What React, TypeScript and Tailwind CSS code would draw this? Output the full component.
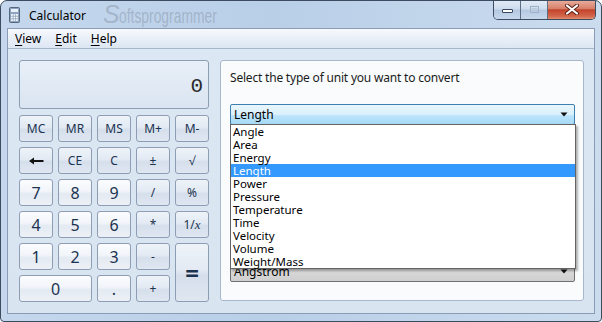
import React from "react";

const units = [
  "Angle",
  "Area",
  "Energy",
  "Length",
  "Power",
  "Pressure",
  "Temperature",
  "Time",
  "Velocity",
  "Volume",
  "Weight/Mass",
];

type Key = { label: React.ReactNode; kind: "num" | "op"; cls?: string; size?: string };

const keys: Key[] = [
  { label: "MC", kind: "op" },
  { label: "MR", kind: "op" },
  { label: "MS", kind: "op" },
  { label: "M+", kind: "op" },
  { label: "M-", kind: "op" },
  {
    label: (
      <svg width="16" height="8" viewBox="0 0 16 8">
        <path d="M1 4 L6 0.5 L6 3 L15.5 3 L15.5 5 L6 5 L6 7.5 Z" fill="#111" />
      </svg>
    ),
    kind: "op",
  },
  { label: "CE", kind: "op" },
  { label: "C", kind: "op" },
  { label: "±", kind: "op" },
  { label: "√", kind: "op" },
  { label: "7", kind: "num" },
  { label: "8", kind: "num" },
  { label: "9", kind: "num" },
  { label: "/", kind: "op" },
  { label: "%", kind: "op" },
  { label: "4", kind: "num" },
  { label: "5", kind: "num" },
  { label: "6", kind: "num" },
  { label: "*", kind: "op" },
  {
    label: (
      <span>
        1/<span className="italic font-['Liberation_Serif',serif] text-[13px]">x</span>
      </span>
    ),
    kind: "op",
  },
  { label: "1", kind: "num" },
  { label: "2", kind: "num" },
  { label: "3", kind: "num" },
  { label: "-", kind: "op" },
  { label: "=", kind: "op", cls: "row-span-2", size: "text-[24px] font-bold" },
  { label: "0", kind: "num", cls: "col-span-2" },
  { label: ".", kind: "num" },
  { label: "+", kind: "op" },
];

function CalcIcon() {
  return (
    <svg width="11" height="16" viewBox="0 0 11 16">
      <rect x="0.5" y="0.5" width="10" height="15" rx="1" fill="#8ea4be" stroke="#55677f" />
      <rect x="2" y="2" width="7" height="3" fill="#e8f1f9" />
      {[0, 1, 2].map((r) =>
        [0, 1, 2].map((c) => (
          <rect key={`${r}${c}`} x={2 + c * 2.5} y={7 + r * 2.6} width="1.8" height="1.8" fill="#f3f6fa" />
        ))
      )}
    </svg>
  );
}

function Arrow() {
  return (
    <svg width="8" height="5" viewBox="0 0 8 5">
      <path d="M0.5 0.5 L7.5 0.5 L4 4.5 Z" fill="#111" />
    </svg>
  );
}

export default function App() {
  const font = "font-['Noto_Sans','Open_Sans',sans-serif]";
  return (
    <div className={`w-[602px] h-[322px] bg-white ${font}`}>
      <div className="h-full flex flex-col rounded-t-[7px] rounded-b-[4px] border border-[#3c4b5f] bg-[linear-gradient(90deg,#c4d7ed_0%,#b9cfe8_45%,#c4d7ec_80%,#cbdcee_100%)] overflow-hidden">
        {/* title bar */}
        <div className="h-[27px] relative flex items-center shrink-0">
          <div className="ml-[8px] mt-[1px]">
            <CalcIcon />
          </div>
          <span className="ml-[9px] mt-[2px] text-[12px] text-black leading-none">Calculator</span>
          <div className="absolute left-[102px] top-[1px] flex items-end text-[rgba(120,132,148,0.4)] font-['Liberation_Sans',sans-serif] leading-none">
            <span className="text-[25px] italic">S</span>
            <span className="text-[21px] scale-x-[0.66] origin-left -ml-[1px] mb-[1px]">oftsprogrammer</span>
          </div>
          {/* window controls */}
          <div className="absolute right-[5px] -top-[1px] h-[20px] flex rounded-b-[5px] border border-t-0 border-[#3d4c60] overflow-hidden">
            <div className="w-[27px] flex items-center justify-center border-r border-[#5d6d82] bg-[linear-gradient(180deg,#e3ecf6_0%,#cddcee_48%,#b4c8e0_52%,#c7d8ec_100%)]">
              <div className="w-[11px] h-[4px] mt-[3px] bg-white border border-[#3a465a] rounded-[1px]" />
            </div>
            <div className="w-[27px] flex items-center justify-center border-r border-[#5d6d82] bg-[linear-gradient(180deg,#e3ecf6_0%,#cddcee_48%,#b4c8e0_52%,#c7d8ec_100%)]">
              <div className="w-[9px] h-[7px] border border-[#9fb1c6] flex items-center justify-center">
                <div className="w-[5px] h-[3px] border border-[#b9c8da]" />
              </div>
            </div>
            <div className="w-[47px] flex items-center justify-center bg-[linear-gradient(180deg,#eab0a0_0%,#d7806a_45%,#c4432b_52%,#d1664b_85%,#e28e6c_100%)]">
              <svg width="14" height="11" viewBox="0 0 14 11">
                <path d="M2 1.5 L12 9.5 M12 1.5 L2 9.5" stroke="#5a2016" strokeWidth="4" strokeLinecap="round" />
                <path d="M2 1.5 L12 9.5 M12 1.5 L2 9.5" stroke="#fff" strokeWidth="2.2" strokeLinecap="round" />
              </svg>
            </div>
          </div>
        </div>

        {/* client area */}
        <div className="mx-[6px] mb-[7px] flex-1 flex flex-col border border-[#8a9cb5]">
          <div className="h-[20px] flex items-center gap-[14px] pl-[7px] text-[12px] text-black border-b border-[#a5b5cb] bg-[linear-gradient(180deg,#f7f9fd_0%,#e9eff8_50%,#dce6f3_100%)]">
            <span>
              <span className="underline underline-offset-2">V</span>iew
            </span>
            <span>
              <span className="underline underline-offset-2">E</span>dit
            </span>
            <span>
              <span className="underline underline-offset-2">H</span>elp
            </span>
          </div>

          <div className="flex-1 flex gap-[11px] pl-[11px] pr-[10px] pt-[11px] bg-[linear-gradient(180deg,#dce7f4_0%,#d9e4f1_100%)]">
            {/* left: calculator */}
            <div className="w-[190px] flex flex-col">
              <div className="h-[49px] mb-[6px] rounded-[3px] border border-[#8d9db3] bg-[linear-gradient(180deg,#e8eff8_0%,#dae5f1_100%)] flex items-center justify-end pr-[5px] pt-[4px]">
                <span className="text-[21px] text-[#2a2a2a] font-['Liberation_Mono',monospace]">0</span>
              </div>
              <div className="grid grid-cols-[repeat(5,34px)] grid-rows-[repeat(6,27px)] gap-[5px]">
                {keys.map((k, i) => (
                  <div
                    key={i}
                    className={`flex items-center justify-center rounded-[3px] border border-[#8d9db3] text-[#1c3350] leading-none ${
                      k.kind === "num"
                        ? "text-[16px] bg-[linear-gradient(180deg,#fbfcfe_0%,#f1f5fa_45%,#e4eaf2_55%,#edf1f7_100%)]"
                        : "text-[12px] bg-[linear-gradient(180deg,#eef3f9_0%,#e3eaf3_45%,#d5dfeb_55%,#dfe7f1_100%)]"
                    } ${k.cls ?? ""} ${k.size ?? ""}`}
                  >
                    {k.label}
                  </div>
                ))}
              </div>
            </div>

            {/* right: unit conversion */}
            <div className="flex-1 h-[241px] rounded-[3px] border border-[#a8b7ca] bg-[#f9fbfd] pl-[9px] pr-[8px] pt-[9px] text-[12px]">
              <div className="h-[16px] leading-[16px] text-[#1b1b1b] tracking-[-0.2px]">
                Select the type of unit you want to convert
              </div>
              <div className="relative mt-[18px]">
                <div className="h-[21px] flex items-center justify-between pl-[3px] pr-[6px] rounded-[2px] border border-[#3c7fb1] bg-[linear-gradient(180deg,#eaf6fd_0%,#d9f0fc_50%,#bee6fd_52%,#a7d9f5_100%)] text-black">
                  <span>Length</span>
                  <Arrow />
                </div>
                <div className="absolute left-0 right-[-1px] top-[20px] z-10 bg-white border border-[#646464] shadow-[2px_2px_2px_rgba(0,0,0,0.3)] text-[11.5px]">
                  {units.map((u) => (
                    <div
                      key={u}
                      className={`h-[13px] leading-[13px] pl-[2px] ${
                        u === "Length" ? "bg-[#3399ff] text-white" : "text-black"
                      }`}
                    >
                      {u}
                    </div>
                  ))}
                </div>
              </div>
              <div className="mt-[136px] h-[21px] flex items-center justify-between pl-[3px] pr-[6px] rounded-[2px] border border-[#707070] bg-[linear-gradient(180deg,#e8e8e8_0%,#d8d8d8_50%,#cfcfcf_100%)] text-black">
                <span>Angstrom</span>
                <Arrow />
              </div>
            </div>
          </div>
        </div>
      </div>
    </div>
  );
}
